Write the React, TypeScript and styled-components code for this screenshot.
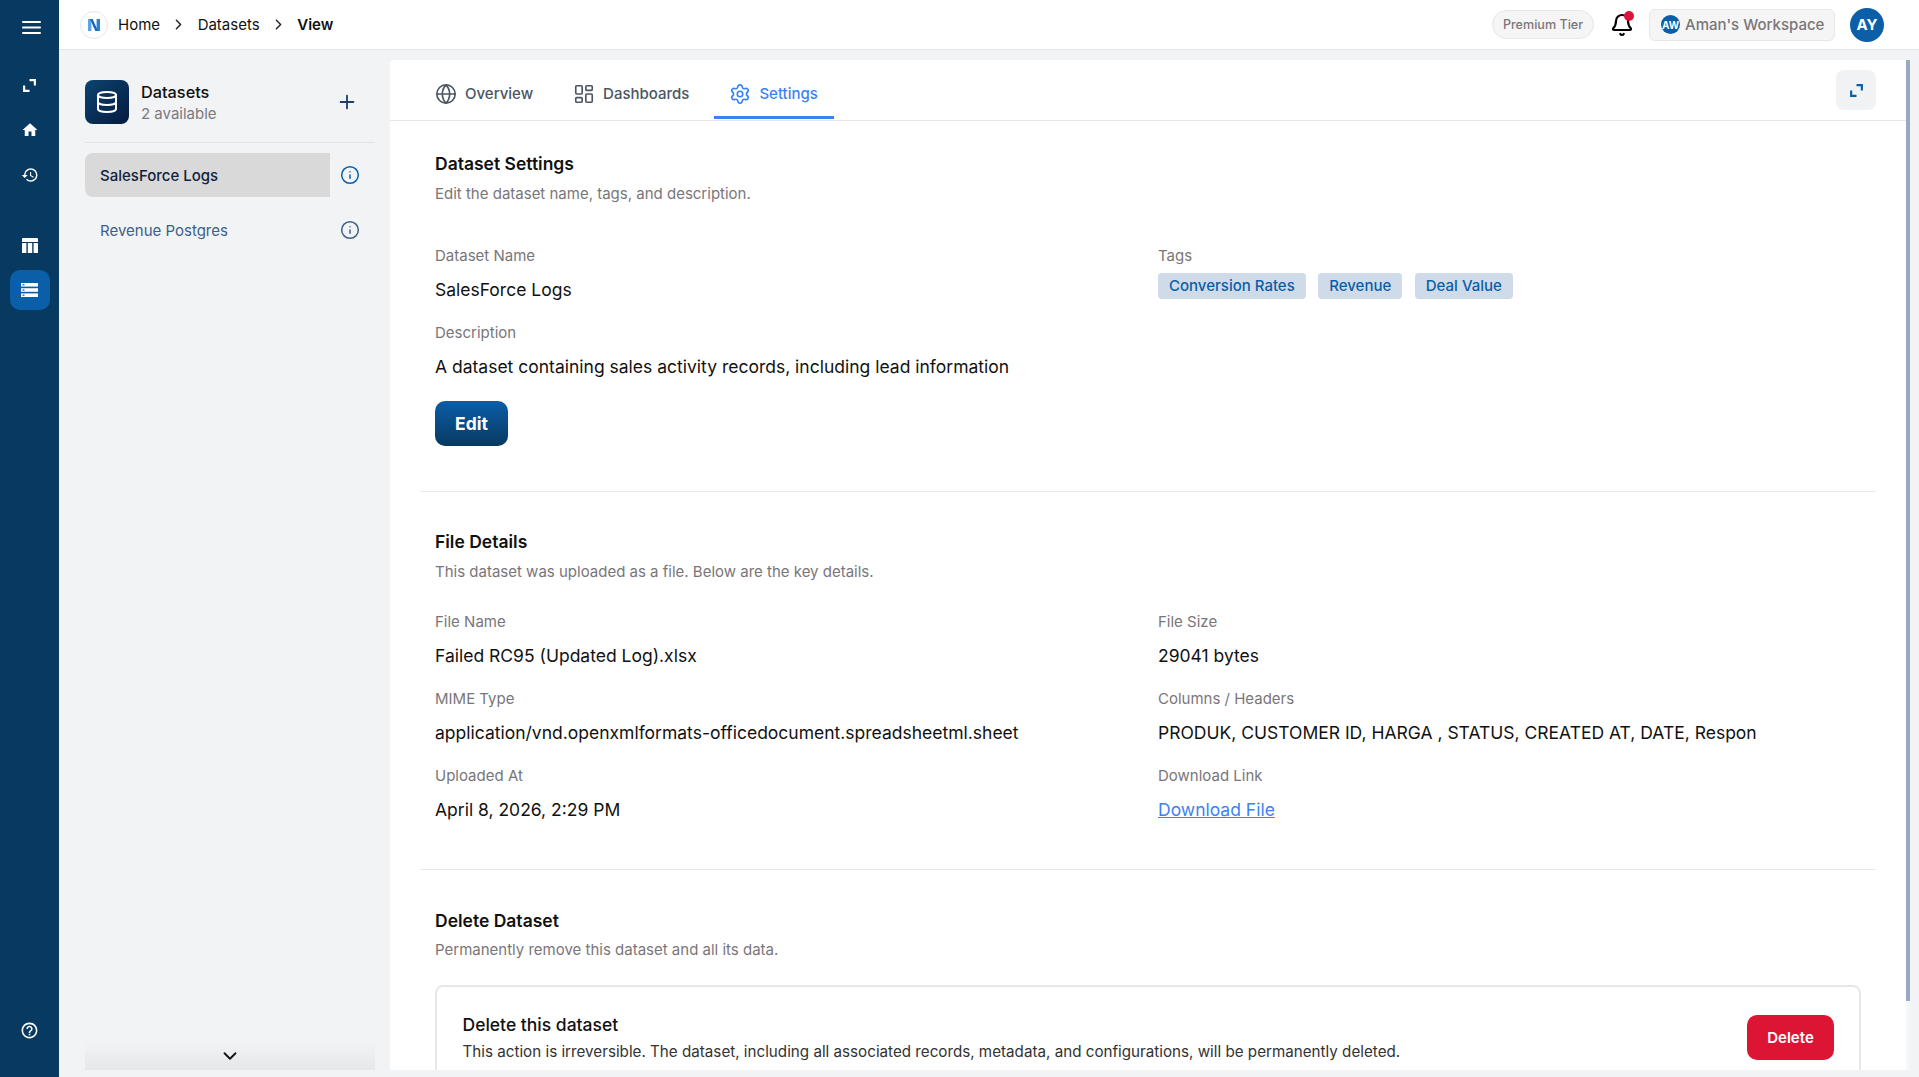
import styled, { createGlobalStyle } from "styled-components";
import {
  Bell,
  ChevronDown,
  ChevronRight,
  Database,
  Globe,
  Info,
  LayoutDashboard,
  Plus,
  Settings,
} from "lucide-react";
import { MdHelpOutline, MdHistory, MdHome } from "react-icons/md";

const NAVY = "#083960";
const BLUE = "#0b5ea8";
const TAB_BLUE = "#3b82f6";
const PAGE_BG = "#f2f3f5";
const LINE = "#e5e7eb";
const MUTED = "#79767a";

const GlobalStyle = createGlobalStyle`
  * { box-sizing: border-box; }
  html, body { margin: 0; height: 100%; overflow: hidden; }
  body {
    font-family: Inter, "Liberation Sans", sans-serif;
    background: ${PAGE_BG};
    color: #111;
  }
`;

const Shell = styled.div`
  display: flex;
  height: 100vh;
`;

const Rail = styled.nav`
  flex: 0 0 59px;
  display: flex;
  flex-direction: column;
  align-items: center;
  background: ${NAVY};
  color: #fff;
  padding-top: 7px;
  padding-bottom: 27px;
`;

const RailButton = styled.div<{ $active?: boolean; $gapTop?: number }>`
  width: 40px;
  height: 40px;
  flex: none;
  display: flex;
  align-items: center;
  justify-content: center;
  border-radius: 10px;
  margin-top: ${(props) => props.$gapTop ?? 0}px;
  background: ${(props) => (props.$active ? BLUE : "transparent")};
`;

const MenuGlyph = styled.svg`
  margin-left: 3px;
`;

const RailSpacer = styled.div`
  flex: 1;
`;

const Main = styled.div`
  flex: 1;
  min-width: 0;
  display: flex;
  flex-direction: column;
`;

const TopBar = styled.header`
  flex: 0 0 50px;
  display: flex;
  align-items: center;
  background: #fff;
  border-bottom: 1px solid ${LINE};
  padding: 0 35px 0 21px;
`;

const LogoCircle = styled.div`
  width: 28px;
  height: 28px;
  border-radius: 50%;
  border: 1px solid ${LINE};
  display: flex;
  align-items: center;
  justify-content: center;
  margin-right: 10px;
`;

const Crumb = styled.span<{ $current?: boolean }>`
  font-size: 15px;
  font-weight: ${(props) => (props.$current ? 600 : 400)};
  color: #111;
`;

const CrumbArrow = styled(ChevronRight)`
  margin: 0 10.3px;
  color: #222;
`;

const TopRight = styled.div`
  margin-left: auto;
  display: flex;
  align-items: center;
`;

const TierPill = styled.div`
  height: 29px;
  width: 102px;
  border-radius: 15px;
  border: 1px solid ${LINE};
  background: #f5f5f5;
  color: ${MUTED};
  font-size: 12.6px;
  font-weight: 500;
  display: flex;
  align-items: center;
  justify-content: center;
`;

const BellWrap = styled.div`
  position: relative;
  width: 24px;
  height: 24px;
  margin: 0 15px 0 16px;
  color: #000;
`;

const BellDot = styled.span`
  position: absolute;
  top: -2px;
  right: 0;
  width: 10px;
  height: 10px;
  border-radius: 50%;
  background: #dc143c;
`;

const WorkspaceButton = styled.div`
  height: 32px;
  width: 186px;
  border-radius: 6px;
  border: 1px solid ${LINE};
  background: #f5f5f5;
  display: flex;
  align-items: center;
  padding-left: 11px;
  gap: 5px;
  color: ${MUTED};
  font-size: 15px;
  font-weight: 500;
`;

const SmallAvatar = styled.span`
  width: 19px;
  height: 19px;
  border-radius: 50%;
  background: ${BLUE};
  color: #fff;
  font-size: 10px;
  font-weight: 700;
  display: flex;
  align-items: center;
  justify-content: center;
`;

const Avatar = styled.div`
  width: 34px;
  height: 34px;
  border-radius: 50%;
  background: ${BLUE};
  color: #fff;
  font-size: 15px;
  font-weight: 700;
  display: flex;
  align-items: center;
  justify-content: center;
  margin-left: 15px;
`;

const Body = styled.div`
  flex: 1;
  min-height: 0;
  display: flex;
  padding: 10px 9px 7px 0;
`;

const DatasetPanel = styled.aside`
  flex: 0 0 331px;
  display: flex;
  flex-direction: column;
  padding: 20px 15px 0 26px;
`;

const PanelHead = styled.div`
  display: flex;
  align-items: center;
  height: 63px;
  padding-bottom: 19px;
  border-bottom: 1px solid #e2e4e8;
`;

const PanelIcon = styled.div`
  width: 44px;
  height: 44px;
  border-radius: 8px;
  background: linear-gradient(135deg, #0b4470, #061a3f);
  color: #fff;
  display: flex;
  align-items: center;
  justify-content: center;
  margin-right: 12px;
`;

const PanelText = styled.div`
  padding-top: 2px;
`;

const PanelTitle = styled.div`
  font-size: 16.3px;
  font-weight: 500;
  line-height: 20px;
  margin-bottom: 1px;
  color: #111;
`;

const PanelCount = styled.div`
  font-size: 15px;
  line-height: 21px;
  color: #7a7a80;
`;

const PanelAdd = styled(Plus)`
  margin-left: auto;
  margin-right: 17px;
  color: #1f3f66;
`;

const DatasetList = styled.div`
  flex: 1;
  padding-top: 10px;
`;

const DatasetRow = styled.div`
  display: flex;
  align-items: center;
  height: 44px;
  margin-bottom: 11px;
`;

const DatasetName = styled.div<{ $selected?: boolean }>`
  width: 245px;
  height: 100%;
  display: flex;
  align-items: center;
  padding-left: 15px;
  font-size: 15px;
  font-weight: ${(props) => (props.$selected ? 500 : 400)};
  color: ${(props) => (props.$selected ? "#10233d" : "#3c5f8c")};
  background: ${(props) => (props.$selected ? "#d9d9d9" : "transparent")};
  border-radius: 8px 0 0 8px;
`;

const DatasetInfo = styled(Info)<{ $selected?: boolean }>`
  margin-left: 10px;
  color: ${(props) => (props.$selected ? BLUE : "#3f5f8a")};
`;

const ScrollFade = styled.div`
  height: 28px;
  display: flex;
  align-items: center;
  justify-content: center;
  background: linear-gradient(180deg, rgba(228, 229, 231, 0), #e6e7e9);
`;

const CardFrame = styled.div`
  flex: 1;
  min-width: 0;
  display: flex;
`;

const Card = styled.main`
  flex: 1;
  min-width: 0;
  background: #fff;
  border-radius: 4px 0 0 0;
  overflow: hidden;
`;

const ScrollTrack = styled.div`
  flex: 0 0 4px;
  background: #f7f7f8;
`;

const ScrollThumb = styled.div`
  height: 941px;
  background: #9aa9c0;
`;

const TabBar = styled.div`
  display: flex;
  align-items: stretch;
  gap: 9px;
  height: 61px;
  padding: 0 30px;
  border-bottom: 1px solid ${LINE};
`;

const Tab = styled.div<{ $active?: boolean }>`
  display: flex;
  align-items: center;
  gap: 8px;
  padding: 11px 16px 0 15px;
  margin-bottom: 1px;
  font-size: 15px;
  font-weight: 500;
  color: ${(props) => (props.$active ? TAB_BLUE : "#4b5563")};
  border-bottom: 3px solid ${(props) => (props.$active ? TAB_BLUE : "transparent")};
`;

const ExpandButton = styled.div`
  margin: 10px 0 10px auto;
  width: 40px;
  height: 40px;
  border-radius: 8px;
  background: #f1f2f3;
  display: flex;
  align-items: center;
  justify-content: center;
`;

const Section = styled.section<{ $top: number; $last?: boolean }>`
  margin: 0 30px;
  padding: ${(props) => props.$top}px 15px 0;
  border-bottom: ${(props) => (props.$last ? "none" : `1px solid ${LINE}`)};
`;

const SectionTitle = styled.h2`
  margin: 0;
  font-size: 17.5px;
  line-height: 24px;
  font-weight: 600;
  color: #111;
`;

const SectionSub = styled.p<{ $gap: number }>`
  margin: ${(props) => props.$gap}px 0 0;
  font-size: 15px;
  line-height: 24px;
  color: ${MUTED};
`;

const FieldGrid = styled.div<{ $top: number; $bottom?: number }>`
  display: grid;
  grid-template-columns: 723px 1fr;
  row-gap: 18px;
  margin-top: ${(props) => props.$top}px;
  margin-bottom: ${(props) => props.$bottom ?? 0}px;
`;

const Field = styled.div`
  min-width: 0;
`;

const FieldLabel = styled.div`
  font-size: 15px;
  line-height: 24px;
  color: ${MUTED};
`;

const FieldValue = styled.div`
  margin-top: 9px;
  font-size: 17.5px;
  line-height: 26px;
  color: #111;
`;

const DownloadLink = styled.a`
  color: ${TAB_BLUE};
  text-decoration: underline;
`;

const TagRow = styled.div`
  display: flex;
  gap: 12.5px;
  margin-top: 5px;
`;

const Tag = styled.span`
  height: 26px;
  padding: 0 11px;
  border-radius: 4px;
  background: #cfdbe8;
  color: ${BLUE};
  font-size: 15px;
  font-weight: 500;
  display: flex;
  align-items: center;
`;

const EditButton = styled.button`
  display: block;
  width: 73px;
  height: 45px;
  margin: 21px 0 45px;
  border: none;
  border-radius: 10px;
  background: linear-gradient(180deg, #0b5ea8, #083960);
  color: #fff;
  font-family: inherit;
  font-size: 17.5px;
  font-weight: 700;
`;

const DangerBox = styled.div`
  margin-top: 23px;
  margin-bottom: 54px;
  height: 105px;
  border: 2px solid ${LINE};
  border-radius: 8px;
  padding: 0 25px 0 25.5px;
  display: flex;
  align-items: center;
  justify-content: space-between;
`;

const DangerCopy = styled.div`
  padding-top: 2px;
`;

const DangerTitle = styled.div`
  font-size: 17.5px;
  line-height: 24px;
  font-weight: 500;
  color: #111;
`;

const DangerText = styled.div`
  margin-top: 4px;
  font-size: 15.2px;
  line-height: 22px;
  color: #333;
`;

const DeleteButton = styled.button`
  width: 87px;
  height: 45px;
  border: none;
  border-radius: 10px;
  background: #dc1535;
  color: #fff;
  font-family: inherit;
  font-size: 15px;
  font-weight: 600;
`;

function CornersIcon({ size, color }: { size: number; color: string }) {
  return (
    <svg width={size} height={size} viewBox="0 0 14 14" fill="none" stroke={color} strokeWidth="2" strokeLinecap="square">
      <path d="M8 2h4v4" />
      <path d="M6 12H2V8" />
    </svg>
  );
}

function TableIcon() {
  return (
    <svg width="16" height="15" viewBox="0 0 16 15" fill="#fff">
      <path d="M1 0h14a1 1 0 0 1 1 1v3H0V1a1 1 0 0 1 1-1z" />
      <rect x="0" y="5" width="4.4" height="10" rx="0.6" />
      <rect x="5.8" y="5" width="4.4" height="10" />
      <rect x="11.6" y="5" width="4.4" height="10" rx="0.6" />
    </svg>
  );
}

function RowsIcon() {
  return (
    <svg width="17" height="14" viewBox="0 0 17 14">
      <rect x="0" y="0" width="17" height="3.6" fill="#fff" />
      <rect x="0" y="5.2" width="17" height="3.6" fill="#fff" />
      <rect x="0" y="10.4" width="17" height="3.6" fill="#fff" />
      <rect x="1.5" y="1.2" width="2" height="1.2" fill={BLUE} />
      <rect x="1.5" y="6.4" width="2" height="1.2" fill={BLUE} />
      <rect x="1.5" y="11.6" width="2" height="1.2" fill={BLUE} />
    </svg>
  );
}

function LogoMark() {
  return (
    <svg width="14" height="14" viewBox="0 0 14 14">
      <path d="M1 1h3.4v12H1z" fill="#5aa5e6" />
      <path d="M9.6 1H13v12H9.6z" fill="#2f7fd0" />
      <path d="M3 1h2.6l5.4 12H8.4z" fill="#1565b8" />
    </svg>
  );
}

const datasets = [
  { name: "SalesForce Logs", selected: true },
  { name: "Revenue Postgres", selected: false },
];

const tags = ["Conversion Rates", "Revenue", "Deal Value"];

const fileFields = [
  { label: "File Name", value: "Failed RC95 (Updated Log).xlsx" },
  { label: "File Size", value: "29041 bytes" },
  { label: "MIME Type", value: "application/vnd.openxmlformats-officedocument.spreadsheetml.sheet" },
  { label: "Columns / Headers", value: "PRODUK, CUSTOMER ID, HARGA , STATUS, CREATED AT, DATE, Respon" },
  { label: "Uploaded At", value: "April 8, 2026, 2:29 PM" },
];

function App() {
  return (
    <>
      <GlobalStyle />
      <Shell>
        <Rail>
          <RailButton>
            <MenuGlyph width="19" height="13" viewBox="0 0 19 13" fill="#fff">
              <rect y="0" width="19" height="2" rx="1" />
              <rect y="5.5" width="19" height="2" rx="1" />
              <rect y="11" width="19" height="2" rx="1" />
            </MenuGlyph>
          </RailButton>
          <RailButton $gapTop={18}>
            <CornersIcon size={15} color="#fff" />
          </RailButton>
          <RailButton $gapTop={5}>
            <MdHome size={18} />
          </RailButton>
          <RailButton $gapTop={5}>
            <MdHistory size={18} />
          </RailButton>
          <RailButton $gapTop={30}>
            <TableIcon />
          </RailButton>
          <RailButton $active $gapTop={5}>
            <RowsIcon />
          </RailButton>
          <RailSpacer />
          <RailButton>
            <MdHelpOutline size={19} />
          </RailButton>
        </Rail>
        <Main>
          <TopBar>
            <LogoCircle>
              <LogoMark />
            </LogoCircle>
            <Crumb>Home</Crumb>
            <CrumbArrow size={17} />
            <Crumb>Datasets</Crumb>
            <CrumbArrow size={17} />
            <Crumb $current>View</Crumb>
            <TopRight>
              <TierPill>Premium Tier</TierPill>
              <BellWrap>
                <Bell size={24} strokeWidth={2.2} />
                <BellDot />
              </BellWrap>
              <WorkspaceButton>
                <SmallAvatar>AW</SmallAvatar>
                Aman's Workspace
              </WorkspaceButton>
              <Avatar>AY</Avatar>
            </TopRight>
          </TopBar>
          <Body>
            <DatasetPanel>
              <PanelHead>
                <PanelIcon>
                  <Database size={24} strokeWidth={2} />
                </PanelIcon>
                <PanelText>
                  <PanelTitle>Datasets</PanelTitle>
                  <PanelCount>2 available</PanelCount>
                </PanelText>
                <PanelAdd size={22} strokeWidth={2} />
              </PanelHead>
              <DatasetList>
                {datasets.map((dataset) => (
                  <DatasetRow key={dataset.name}>
                    <DatasetName $selected={dataset.selected}>{dataset.name}</DatasetName>
                    <DatasetInfo size={20} strokeWidth={1.8} $selected={dataset.selected} />
                  </DatasetRow>
                ))}
              </DatasetList>
              <ScrollFade>
                <ChevronDown size={22} color="#111" />
              </ScrollFade>
            </DatasetPanel>
            <CardFrame>
              <Card>
                <TabBar>
                  <Tab>
                    <Globe size={22} strokeWidth={1.8} />
                    Overview
                  </Tab>
                  <Tab>
                    <LayoutDashboard size={22} strokeWidth={1.8} />
                    Dashboards
                  </Tab>
                  <Tab $active>
                    <Settings size={22} strokeWidth={1.8} />
                    Settings
                  </Tab>
                  <ExpandButton>
                    <CornersIcon size={15} color={BLUE} />
                  </ExpandButton>
                </TabBar>
                <Section $top={31}>
                  <SectionTitle>Dataset Settings</SectionTitle>
                  <SectionSub $gap={5.5}>Edit the dataset name, tags, and description.</SectionSub>
                  <FieldGrid $top={38}>
                    <Field>
                      <FieldLabel>Dataset Name</FieldLabel>
                      <FieldValue>SalesForce Logs</FieldValue>
                    </Field>
                    <Field>
                      <FieldLabel>Tags</FieldLabel>
                      <TagRow>
                        {tags.map((tag) => (
                          <Tag key={tag}>{tag}</Tag>
                        ))}
                      </TagRow>
                    </Field>
                    <Field>
                      <FieldLabel>Description</FieldLabel>
                      <FieldValue>A dataset containing sales activity records, including lead information</FieldValue>
                    </Field>
                  </FieldGrid>
                  <EditButton>Edit</EditButton>
                </Section>
                <Section $top={38}>
                  <SectionTitle>File Details</SectionTitle>
                  <SectionSub $gap={6.5}>This dataset was uploaded as a file. Below are the key details.</SectionSub>
                  <FieldGrid $top={26} $bottom={46}>
                    {fileFields.map((field) => (
                      <Field key={field.label}>
                        <FieldLabel>{field.label}</FieldLabel>
                        <FieldValue>{field.value}</FieldValue>
                      </Field>
                    ))}
                    <Field>
                      <FieldLabel>Download Link</FieldLabel>
                      <FieldValue>
                        <DownloadLink href="#">Download File</DownloadLink>
                      </FieldValue>
                    </Field>
                  </FieldGrid>
                </Section>
                <Section $top={39} $last>
                  <SectionTitle>Delete Dataset</SectionTitle>
                  <SectionSub $gap={4.5}>Permanently remove this dataset and all its data.</SectionSub>
                  <DangerBox>
                    <DangerCopy>
                      <DangerTitle>Delete this dataset</DangerTitle>
                      <DangerText>
                        This action is irreversible. The dataset, including all associated records, metadata, and configurations, will be permanently deleted.
                      </DangerText>
                    </DangerCopy>
                    <DeleteButton>Delete</DeleteButton>
                  </DangerBox>
                </Section>
              </Card>
              <ScrollTrack>
                <ScrollThumb />
              </ScrollTrack>
            </CardFrame>
          </Body>
        </Main>
      </Shell>
    </>
  );
}

export default App;
